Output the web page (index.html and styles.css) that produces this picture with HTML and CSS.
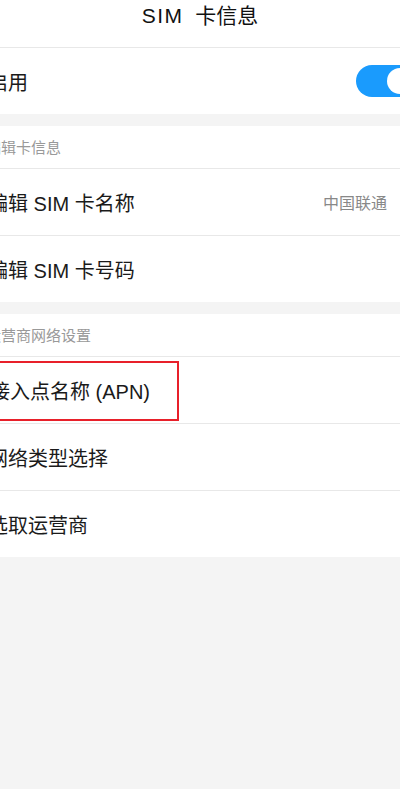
FILE: index.html
```html
<!DOCTYPE html>
<html lang="zh-CN">
<head>
	<meta charset="UTF-8">
	<title>SIM 卡信息</title>
	<link rel="stylesheet" href="styles.css">
</head>
<body>
	<div class="page">
		<div class="title"><span class="latin">SIM</span>&nbsp; 卡信息</div>

		<div class="group">
			<div class="row">
				<span class="label">启用</span>
				<span class="switch"><i class="knob"></i></span>
			</div>
		</div>

		<div class="group">
			<div class="head">编辑卡信息</div>
			<div class="row line">
				<span class="label">编辑 SIM 卡名称</span>
				<span class="value">中国联通</span>
			</div>
			<div class="row">
				<span class="label">编辑 SIM 卡号码</span>
			</div>
		</div>

		<div class="group">
			<div class="head">运营商网络设置</div>
			<div class="row line">
				<span class="mark"><span class="label">接入点名称 (APN)</span></span>
			</div>
			<div class="row line">
				<span class="label">网络类型选择</span>
			</div>
			<div class="row">
				<span class="label">选取运营商</span>
			</div>
		</div>
	</div>
</body>
</html>
```

FILE: styles.css
```css
html, body {
	margin: 0;
	padding: 0;
	overflow-x: hidden;
}

body {
	background: #f4f4f4;
	font-family: "Liberation Sans", "Noto Sans CJK SC", sans-serif;
	color: #1a1a1a;
}

.page {
	height: 789px;
	overflow: hidden;
}

.title {
	height: 32px;
	padding-bottom: 15px;
	line-height: 32px;
	text-align: center;
	font-size: 21px;
	color: #111;
	background: #fff;
	border-bottom: 1px solid #e8e8e8;
}
.title .latin {
	letter-spacing: 1.5px;
}

.group {
	background: #fff;
	margin-bottom: 12px;
}

.head {
	height: 42px;
	line-height: 43px;
	font-size: 15px;
	color: #999;
	text-indent: -14px;
	border-bottom: 1px solid #e8e8e8;
}

.row {
	height: 66px;
	display: flex;
	align-items: center;
	justify-content: space-between;
	padding-right: 13px;
	font-size: 20px;
}
.row.line {
	border-bottom: 1px solid #e8e8e8;
}

.label {
	margin-left: -12px;
	white-space: nowrap;
}

.value {
	font-size: 16px;
	color: #888;
}

.switch {
	display: flex;
	justify-content: flex-end;
	align-items: center;
	box-sizing: border-box;
	width: 60px;
	height: 32px;
	padding: 0 3px;
	margin-right: -29px;
	border-radius: 16px;
	background: #1a9bfd;
}
.knob {
	width: 26px;
	height: 26px;
	border-radius: 50%;
	background: #fff;
}

.mark {
	display: flex;
	align-items: center;
	box-sizing: border-box;
	height: 60px;
	width: 209px;
	margin-left: -30px;
	margin-top: 1px;
	padding-left: 18px;
	border: 2px solid #e8202a;
}
.mark .label {
	margin-left: 0;
}
```
